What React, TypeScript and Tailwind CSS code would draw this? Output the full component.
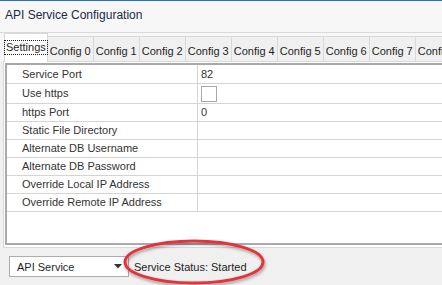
import React from "react";

type Row = { label: string; value?: string; check?: boolean; h: string };

const rows: Row[] = [
  { label: "Service Port", value: "82", h: "h-[19px]" },
  { label: "Use https", check: true, h: "h-[20px]" },
  { label: "https Port", value: "0", h: "h-[18px]" },
  { label: "Static File Directory", h: "h-[18px]" },
  { label: "Alternate DB Username", h: "h-[18px]" },
  { label: "Alternate DB Password", h: "h-[18px]" },
  { label: "Override Local IP Address", h: "h-[18px]" },
  { label: "Override Remote IP Address", h: "h-[18px]" },
];

const tabs = ["Config 0", "Config 1", "Config 2", "Config 3", "Config 4", "Config 5", "Config 6", "Config 7", "Config 8"];

export default function App() {
  return (
    <div className="relative w-[442px] h-[285px] overflow-hidden bg-[#f0f0f0] text-[#1f1f1f] font-['Liberation_Sans',Arial,sans-serif]">
      {/* title bar */}
      <div className="h-[33px] bg-[#f7f7f7] border-t border-[#2a6fc9] border-b border-b-[#dadada]">
        <div className="pl-[5px] pt-[6px] text-[12px] leading-[16px] text-[#1b2a44]">API Service Configuration</div>
      </div>

      {/* tabs */}
      <div className="flex items-end h-[28px] pl-[4px] bg-[#f7f7f7]">
        <div className="relative z-10 w-[48px] h-[29px] -mb-px bg-white border border-b-0 border-[#d9d9d9] flex items-start justify-center pt-[7px]">
          <span className="text-[11px] leading-[13px] px-px outline outline-1 outline-dotted outline-[#222]">Settings</span>
        </div>
        {tabs.map((t) => (
          <div
            key={t}
            className="shrink-0 w-[47px] h-[25px] -ml-px bg-[#f0f0f0] border border-b-0 border-[#d9d9d9] flex items-start justify-center pt-[8px] text-[11px] leading-[13px] whitespace-nowrap"
          >
            {t}
          </div>
        ))}
      </div>

      {/* tab page */}
      <div className="ml-[3px] h-[187px] bg-white border-t border-l border-b border-[#d9d9d9] pt-px pl-px pb-[2px]">
        <div className="h-full border-t-2 border-l-2 border-b-2 border-[#a9a9a9] bg-white">
          {rows.map((r) => (
            <div key={r.label} className={`flex ${r.h} border-b border-[#d4d4d4] text-[11px] leading-[13px] text-[#333]`}>
              <div className="w-[191px] shrink-0 border-r border-[#d4d4d4] pl-[15px] flex items-center">{r.label}</div>
              <div className="flex-1 pl-[3px] flex items-center">
                {r.check ? (
                  <div className="w-[16px] h-[16px] border border-[#a8a8a8] bg-white" />
                ) : (
                  r.value
                )}
              </div>
            </div>
          ))}
        </div>
      </div>

      {/* bottom bar */}
      <div className="flex items-center h-[37px] pl-[9px]">
        <div className="w-[120px] h-[21px] bg-white border border-[#adadad] flex items-center justify-between pl-[7px] pr-[6px] text-[11px] leading-[14px]">
          <span>API Service</span>
          <svg width="8" height="5" viewBox="0 0 8 5">
            <path d="M0 0 H8 L4 4.5 Z" fill="#333" />
          </svg>
        </div>
        <span className="ml-[5px] text-[11px] leading-[14px] text-[#222]">Service Status: Started</span>
      </div>

      {/* red highlight ellipse */}
      <svg className="absolute left-0 top-0 pointer-events-none" width="442" height="285">
        <defs>
          <filter id="sh" x="-20%" y="-40%" width="140%" height="180%">
            <feDropShadow dx="1" dy="2" stdDeviation="1.5" floodColor="#000" floodOpacity="0.35" />
          </filter>
        </defs>
        <ellipse cx="194" cy="262" rx="69" ry="21" fill="none" stroke="#e8333b" strokeWidth="3" filter="url(#sh)" />
      </svg>
    </div>
  );
}
